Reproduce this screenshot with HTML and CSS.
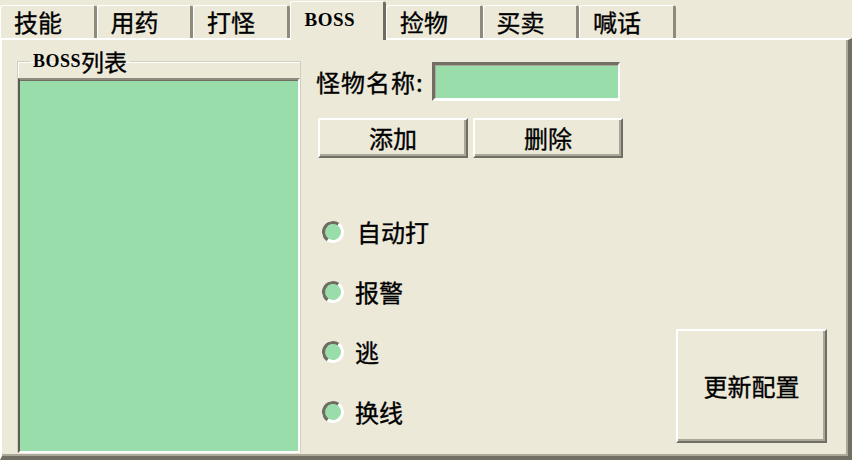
FILE: index.html
```html
<!DOCTYPE html>
<html lang="zh-CN">
<head>
<meta charset="utf-8">
<title>BOSS</title>
<link rel="stylesheet" href="styles.css">
</head>
<body>
<div class="window">
  <div class="tabs">
    <div class="tab">技能</div>
    <div class="tab">用药</div>
    <div class="tab">打怪</div>
    <div class="tab tab-active"><span class="latin">BOSS</span></div>
    <div class="tab">捡物</div>
    <div class="tab">买卖</div>
    <div class="tab">喊话</div>
  </div>
  <div class="panel">
    <fieldset class="group">
      <legend class="legend"><span class="latin small">BOSS</span><span class="cjk-legend">列表</span></legend>
      <div class="listbox"></div>
    </fieldset>
    <div class="right">
      <div class="row-name">
        <span class="label">怪物名称:</span>
        <div class="textbox"></div>
      </div>
      <div class="row-buttons">
        <div class="btn btn-small">添加</div>
        <div class="btn btn-small">删除</div>
      </div>
      <div class="bottom">
        <div class="radios">
          <div class="radio-row"><span class="radio"></span><span class="radio-label first">自动打</span></div>
          <div class="radio-row"><span class="radio"></span><span class="radio-label">报警</span></div>
          <div class="radio-row"><span class="radio"></span><span class="radio-label">逃</span></div>
          <div class="radio-row"><span class="radio"></span><span class="radio-label">换线</span></div>
        </div>
        <div class="btn btn-big">更新配置</div>
      </div>
    </div>
  </div>
</div>
</body>
</html>
```
FILE: styles.css
```css
* { box-sizing: border-box; }
html, body {
  margin: 0;
  padding: 0;
  width: 852px;
  height: 460px;
  overflow: hidden;
  background: #ECE9D8;
}
body {
  font-family: "Noto Sans CJK SC", "Noto Sans", sans-serif;
  font-size: 24px;
  color: #000;
  -webkit-text-stroke: 0.35px #000;
}
.window {
  width: 852px;
  height: 460px;
  display: flex;
  flex-direction: column;
}
.tabs {
  height: 38px;
  display: flex;
  align-items: flex-end;
  position: relative;
  z-index: 2;
}
.tab {
  flex: 0 0 96.5px;
  height: 33px;
  padding-left: 13px;
  display: flex;
  align-items: center;
  border-left: 1px solid #FFFFFF;
  border-top: 1px solid #FFFFFF;
  border-right: 3px solid #8E8B7E;
  border-top-left-radius: 3px;
  border-top-right-radius: 3px;
  background: #ECE9D8;
  line-height: 1;
}
.tab-active {
  height: 39px;
  margin-bottom: -2px;
  padding-bottom: 4px;
  padding-left: 14px;
  border-right-color: #6F6D62;
}
.latin {
  font-family: "Liberation Serif", serif;
  font-weight: bold;
  font-size: 19px;
  letter-spacing: 0.5px;
  -webkit-text-stroke: 0;
}
.panel {
  flex: 1;
  display: flex;
  border-top: 2px solid #FFFFFF;
  border-left: 2px solid #FFFFFF;
  border-right: 4px solid #716F64;
  border-bottom: 4px solid #716F64;
  box-shadow: inset -2px -2px 0 #ACA899;
}
.group {
  margin: 10px 0 0 15px;
  padding: 6px 0 0 0;
  width: 284px;
  height: 403px;
  border: 1px solid #D0CEBF;
  border-bottom: none;
  box-shadow: inset 1px 1px 0 #FFFFFF;
  display: flex;
  flex-direction: column;
}
.legend {
  margin-left: 12px;
  padding: 0 3px;
  line-height: 22px;
  height: 22px;
  display: flex;
  align-items: center;
}
.small { font-size: 18px; }
.cjk-legend { font-size: 23px; line-height: 22px; }
.listbox {
  flex: 1;
  background: #98DDAA;
  border-top: 2px solid #8E8B7E;
  border-left: 2px solid #5E5C52;
  border-right: 2px solid #FFFFFF;
  border-bottom: 2px solid #FFFFFF;
  box-shadow: inset 0 1px 0 #716F64;
}
.right {
  flex: 1;
  margin-left: 15px;
  display: flex;
  flex-direction: column;
}
.row-name {
  margin-top: 22px;
  height: 39px;
  display: flex;
  align-items: center;
}
.label {
  width: 116px;
  line-height: 1;
  letter-spacing: 1px;
}
.textbox {
  width: 188px;
  height: 39px;
  background: #98DDAA;
  border-top: 3px solid #716F64;
  border-left: 3px solid #716F64;
  border-right: 2px solid #FFFFFF;
  border-bottom: 3px solid #FFFFFF;
  box-shadow: inset 1px 1px 0 #ACA899;
}
.row-buttons {
  margin-top: 17px;
  margin-left: 2px;
  display: flex;
  gap: 5px;
}
.btn {
  display: flex;
  align-items: center;
  justify-content: center;
  background: #ECE9D8;
  border-top: 2px solid #FFFFFF;
  border-left: 2px solid #FFFFFF;
  border-right: 2px solid #716F64;
  border-bottom: 2px solid #716F64;
  box-shadow: inset -2px -2px 0 #ACA899;
  line-height: 1;
}
.btn-small {
  width: 150px;
  height: 40px;
}
.bottom {
  height: 289px;
  display: flex;
  justify-content: space-between;
  align-items: flex-end;
}
.radios {
  align-self: flex-start;
  margin-top: 62px;
  margin-left: 6px;
  display: flex;
  flex-direction: column;
  gap: 36px;
}
.radio-row {
  height: 24px;
  display: flex;
  align-items: center;
}
.radio {
  width: 22px;
  height: 22px;
  border-radius: 50%;
  background: #98DDAA;
  border: 3px solid;
  border-color: #6F6D62 #FFFFFF #FFFFFF #6F6D62;
  transform: rotate(-10deg);
}
.radio-label {
  margin-left: 11px;
  line-height: 1;
}
.radio-label.first { margin-left: 13px; }
.btn-big {
  width: 151px;
  height: 114px;
  margin-right: 21px;
  margin-bottom: 4px;
}
```
